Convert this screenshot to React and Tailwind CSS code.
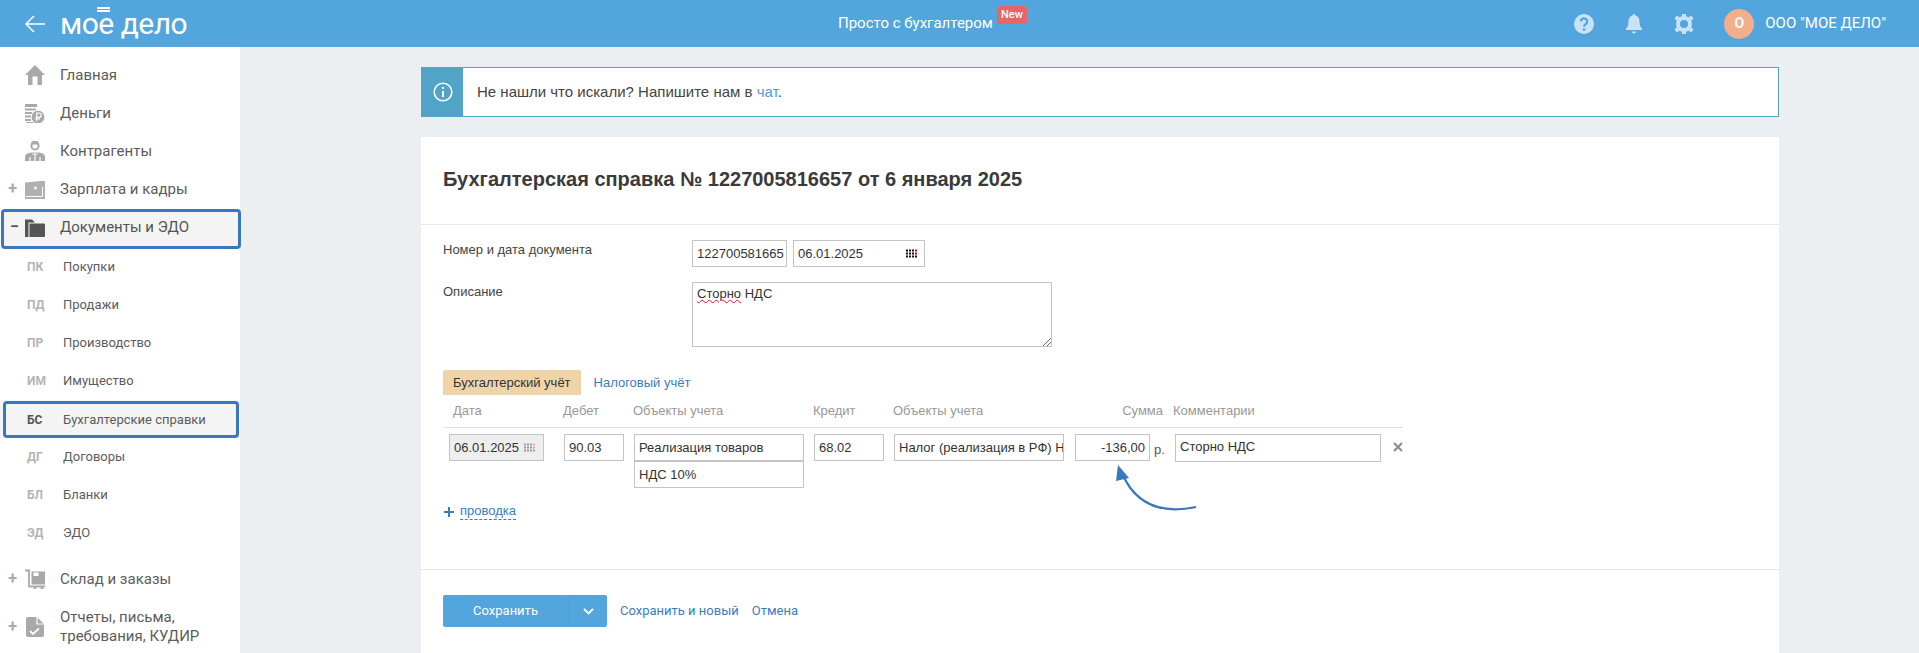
const ICONS = {
  home: (
    <path d="M10 0 L20 10 H17 V20 H12.500 V11.500 H7.500 V20 H3 V10 H0 Z" fill="#a9a9a9" />
  ),
  money: (
    <>
      <path d="M0 1h12v3H0zM0 5.500h11v2H0zM0 9h7v2H0zM0 12.500h6v2H0zM0 16h6v2H0zM1 19h9v1H1z" fill="#a9a9a9" />
      <circle cx="13" cy="14" r="6.800" fill="#a9a9a9" stroke="#fff" strokeWidth="0.800" />
      <path d="M11.800 18v-8h2.200a2 2 0 0 1 0 4.400H10.400M10.400 16H15" stroke="#fff" strokeWidth="1.200" fill="none" />
    </>
  ),
  people: (
    <>
      <circle cx="10" cy="5" r="3.600" fill="none" stroke="#a9a9a9" strokeWidth="2" />
      <path d="M6 3.500a4 4 0 0 1 8 0z" fill="#a9a9a9" />
      <path d="M0 20v-4c0-3 3-4 6.500-4.500H13.500c3.500.5 6.500 1.500 6.500 4.500v4z" fill="#a9a9a9" />
      <path d="M7.500 13h5M10 13v7M5 16v4M15 16v4" stroke="#fff" strokeWidth="1.200" />
    </>
  ),
  wallet: (
    <>
      <path d="M0 3.500 L16 2 L20 2 V20 H0 Z" fill="#b0b0b0" />
      <path d="M1 17.500H17.500V8" fill="none" stroke="#fff" strokeWidth="1" />
      <circle cx="10.500" cy="9" r="1.400" fill="#fff" />
    </>
  ),
  folder: (
    <>
      <path d="M0 2.500h7l3 3H3.500V20H0z" fill="#555" />
      <path d="M4.500 6.500H19a1 1 0 0 1 1 1V19a1 1 0 0 1-1 1H4.500z" fill="#555" />
    </>
  ),
  cart: (
    <>
      <path d="M0 1.500h4v16h16" fill="none" stroke="#a9a9a9" strokeWidth="1.800" />
      <path d="M6.500 2.500H20v13H6.500z" fill="#a9a9a9" />
      <path d="M8.500 3.500h5v3.500h-5z" fill="#fff" />
      <circle cx="10" cy="19.500" r="1.400" fill="#a9a9a9" />
      <circle cx="17" cy="19.500" r="1.400" fill="#a9a9a9" />
    </>
  ),
  report: (
    <>
      <path d="M3 0h9l7 7v11a2 2 0 0 1-2 2H3a2 2 0 0 1-2-2V2a2 2 0 0 1 2-2z" fill="#a9a9a9" />
      <path d="M12 0v7h7" fill="none" stroke="#fff" strokeWidth="1.200" />
      <path d="M5 14l3 3 6-5.500" fill="none" stroke="#fff" strokeWidth="1.800" />
    </>
  ),
};

const NavIcon = ({ name }) => (
  <svg width="20" height="20" viewBox="0 0 20 20" className="shrink-0">
    {ICONS[name]}
  </svg>
);

const NavRow = ({ icon, toggle, tall, children }) => (
  <div className={`flex items-center ${tall ? 'h-[58px]' : 'h-[38px]'}`}>
    <span className="w-[25px] text-center text-[16px] font-bold leading-none text-[#aaa]">{toggle}</span>
    <NavIcon name={icon} />
    <span className="ml-[15px] text-[15px] leading-[19px] text-[#5c5c5c]">{children}</span>
  </div>
);

const SubRow = ({ code, children }) => (
  <div className="flex h-[38px] items-center">
    <span className="ml-[27px] w-[36px] text-[12px] font-bold text-[#b4b4b4]">{code}</span>
    <span className="text-[13px] text-[#5c5c5c]">{children}</span>
  </div>
);

const Sidebar = () => (
  <aside className="w-[240px] shrink-0 bg-white pt-[9px] font-['Roboto',sans-serif]">
    <NavRow icon="home">Главная</NavRow>
    <NavRow icon="money">Деньги</NavRow>
    <NavRow icon="people">Контрагенты</NavRow>
    <NavRow icon="wallet" toggle="+">Зарплата и кадры</NavRow>
    {/* selected group, the frame hangs 1px below and past the rail */}
    <div className="relative z-10 mb-[-1px] ml-px mt-px flex h-[40px] w-[240px] items-center rounded-[4px] border-[3px] border-[#3a78bd] bg-[#f4f4f5] pb-[4px]">
      <span className="w-[21px] text-center text-[16px] font-bold leading-none text-[#555]">−</span>
      <NavIcon name="folder" />
      <span className="ml-[15px] text-[15px] leading-[19px] text-[#555]">Документы и ЭДО</span>
    </div>
    <SubRow code="ПК">Покупки</SubRow>
    <SubRow code="ПД">Продажи</SubRow>
    <SubRow code="ПР">Производство</SubRow>
    <SubRow code="ИМ">Имущество</SubRow>
    <div className="h-[38px] bg-[#f5f5f5] pl-[3px] pr-px pt-px">
      <div className="flex h-[37px] items-center rounded-[4px] border-[3px] border-[#3a78bd] bg-[#f4f4f5]">
        <span className="ml-[21px] w-[36px] text-[12px] font-bold text-[#555]">БС</span>
        <span className="text-[13px] text-[#5c5c5c]">Бухгалтерские справки</span>
      </div>
    </div>
    <SubRow code="ДГ">Договоры</SubRow>
    <SubRow code="БЛ">Бланки</SubRow>
    <SubRow code="ЭД">ЭДО</SubRow>
    <div className="h-2" />
    <NavRow icon="cart" toggle="+">Склад и заказы</NavRow>
    <NavRow icon="report" toggle="+" tall>
      Отчеты, письма,
      <br />
      требования, КУДИР
    </NavRow>
  </aside>
);

const Header = () => (
  <header className="flex h-[47px] shrink-0 items-center bg-[#53a6dd] font-['Roboto',sans-serif] text-white">
    <div className="flex w-[838px] shrink-0 items-center pl-[25px]">
      <svg width="20" height="18" viewBox="0 0 20 18" fill="none" stroke="#fff" strokeWidth="1.500">
        <path d="M20 9H1M9 1 1 9l8 8" />
      </svg>
      <div className="relative ml-[15px] text-[30px] font-normal leading-none tracking-[-0.5px]">
        мое дело
        <span className="absolute left-[37px] top-[-2px] flex w-[13px] flex-col gap-[1.500px]">
          <span className="h-[2px] bg-white" />
          <span className="h-[2px] bg-white" />
        </span>
      </div>
    </div>
    <span className="text-[15px]">Просто с бухгалтером</span>
    <span className="mb-[18px] ml-[4px] rounded-[3px] bg-[#e96464] px-[4px] text-[11px] font-medium leading-[18px]">New</span>
    <div className="ml-auto flex items-center pr-[33px]">
      <svg width="20" height="20" viewBox="0 0 20 20">
        <circle cx="10" cy="10" r="10" fill="#c8e2f6" />
        <path d="M6.800 7.500a3.200 3.200 0 1 1 4.800 2.800c-1 .6-1.500 1.100-1.500 2.400" fill="none" stroke="#53a6dd" strokeWidth="2.200" />
        <circle cx="10.100" cy="15.600" r="1.300" fill="#53a6dd" />
      </svg>
      <svg width="16" height="20" viewBox="0 0 16 20" className="ml-[32px]">
        <path d="M8 0a1.500 1.500 0 0 1 1.500 1.600C12 2.300 13.500 4.500 13.500 7.500c0 4 .8 5.500 2.500 7V16H0v-1.500c1.700-1.500 2.500-3 2.500-7 0-3 1.500-5.200 4-5.900A1.500 1.500 0 0 1 8 0z" fill="#c8e2f6" />
        <path d="M6 17.500h4a2 2 0 0 1-4 0z" fill="#c8e2f6" />
      </svg>
      <svg width="20" height="20" viewBox="0 0 20 20" className="ml-[32px]">
        <circle cx="10" cy="10" r="6" fill="none" stroke="#c8e2f6" strokeWidth="4" />
        <path d="M8 0h4v4H8zM8 16h4v4H8zM0.500 5l2-3.500L6 3.500l-2 3.500zM14 16.500l2-3.500 3.500 2-2 3.500zM2.500 18.500l-2-3.500L4 13l2 3.500zM16 7l-2-3.500 3.500-2 2 3.500z" fill="#c8e2f6" />
      </svg>
      <span className="ml-[30px] flex h-[30px] w-[30px] items-center justify-center rounded-full bg-[#f3ae8a] text-[14px] font-bold">
        О
      </span>
      <span className="ml-[11px] text-[15px]">ООО "МОЕ ДЕЛО"</span>
    </div>
  </header>
);

const DateDots = ({ muted }) => {
  const dots = [];
  [0, 1, 2].forEach((row) =>
    [0, 1, 2, 3].forEach((col) => {
      const red = col === 3 && row < 2;
      const fill = muted ? (red ? '#e9a0b0' : '#999') : red ? '#d4002a' : '#111';
      dots.push(<rect key={`${row}-${col}`} x={col * 3} y={row * 3 + 0.5} width="2" height="2" fill={fill} />);
    }),
  );
  return (
    <svg width="12" height="9" viewBox="0 0 12 9" className="shrink-0">
      {dots}
    </svg>
  );
};

const Field = ({ className = '', bg = 'bg-white', children }) => (
  <div
    className={`flex h-[27px] shrink-0 items-center overflow-hidden whitespace-nowrap border border-[#c4c4c4] px-[4px] text-[13px] text-[#333] ${bg} ${className}`}
  >
    {children}
  </div>
);

const Form = () => (
  <section className="relative mt-5 flex-1 bg-white font-['Liberation_Sans',sans-serif] text-[#333]">
    <h1 className="flex h-[88px] items-center border-b border-[#e6e6e6] pb-[3px] pl-[22px] text-[20px] font-bold text-[#3a3a3a]">
      Бухгалтерская справка № 1227005816657 от 6 января 2025
    </h1>

    <div className="flex pl-[22px] pt-[15px]">
      <label className="w-[249px] pt-[2px] text-[13px] leading-[16px] text-[#444]">Номер и дата документа</label>
      <Field className="w-[95px]">122700581665</Field>
      <Field className="ml-[6px] w-[132px] justify-between">
        06.01.2025
        <span className="pr-[2px]"><DateDots /></span>
      </Field>
    </div>

    <div className="mt-[15px] flex pl-[22px]">
      <label className="w-[249px] pt-[2px] text-[13px] leading-[16px] text-[#444]">Описание</label>
      <div className="relative h-[65px] w-[360px] border border-[#c4c4c4] px-[4px] pt-[3px] text-[13px] leading-[16px]">
        <span className="underline decoration-[#e0103a] decoration-wavy decoration-1">Сторно</span> НДС
        <svg width="9" height="9" viewBox="0 0 9 9" className="absolute bottom-0 right-0" stroke="#666" strokeWidth="1">
          <path d="M1 9 9 1M5 9l4-4" />
        </svg>
      </div>
    </div>

    <div className="mt-[23px] flex items-center pl-[22px] text-[13px]">
      <span className="rounded-t-[2px] bg-[#efd4a9] px-[10px] leading-[25px]">Бухгалтерский учёт</span>
      <span className="ml-[13px] text-[#3a7dbe]">Налоговый учёт</span>
    </div>

    <div className="ml-[22px] flex h-[33px] w-[960px] items-center border-b border-[#e0e0e0] text-[13px] text-[#999]">
      <span className="ml-[10px] w-[110px]">Дата</span>
      <span className="w-[70px]">Дебет</span>
      <span className="w-[180px]">Объекты учета</span>
      <span className="w-[80px]">Кредит</span>
      <span className="w-[200px]">Объекты учета</span>
      <span className="w-[70px] text-right">Сумма</span>
      <span className="ml-[10px]">Комментарии</span>
    </div>

    <div className="ml-[28px] mt-[6px] flex items-start text-[13px]">
      <Field className="w-[95px] justify-between" bg="bg-[#eeeeee]">
        06.01.2025
        <span className="pr-[3px]"><DateDots muted /></span>
      </Field>
      <Field className="ml-[20px] w-[60px]">90.03</Field>
      <div className="ml-[10px] flex w-[170px] flex-col">
        <Field className="w-full">Реализация товаров</Field>
        <Field className="w-full">НДС 10%</Field>
      </div>
      <Field className="ml-[10px] w-[70px]">68.02</Field>
      <Field className="ml-[10px] w-[170px]">Налог (реализация в РФ) Н</Field>
      <Field className="ml-[11px] w-[75px] justify-end">-136,00</Field>
      <span className="ml-[4px] w-[21px] pt-[6px] text-[#555]">р.</span>
      <Field className="h-[28px] w-[206px] pb-[3px]">Сторно НДС</Field>
      <svg width="10" height="10" viewBox="0 0 10 10" className="ml-[12px] mt-[8px]" stroke="#8e8e8e" strokeWidth="2.200">
        <path d="M1 1l8 8M9 1l-8 8" />
      </svg>
    </div>

    <div className="ml-[23px] mt-[15px] flex items-center text-[13px] text-[#3a7dbe]">
      <svg width="10" height="10" viewBox="0 0 10 10" stroke="#3a7dbe" strokeWidth="2">
        <path d="M5 0v10M0 5h10" />
      </svg>
      <span className="ml-[6px] border-b border-dashed border-[#3a7dbe] leading-[16px]">проводка</span>
    </div>

    <div className="mt-[49px] flex items-center border-t border-[#e6e6e6] pl-[22px] pt-[25px] text-[13px]">
      <div className="flex h-[32px] w-[164px] items-center rounded-[2px] bg-[#53a6dd] font-['Roboto',sans-serif] text-white">
        <span className="w-[125px] text-center">Сохранить</span>
        <span className="flex h-full flex-1 items-center justify-center border-l border-[#50a2d8]">
          <svg width="11" height="7" viewBox="0 0 11 7" fill="none" stroke="#fff" strokeWidth="1.800">
            <path d="m1 1 4.500 4.500L10 1" />
          </svg>
        </span>
      </div>
      <span className="ml-[13px] font-['Roboto',sans-serif] text-[#3a7dbe]">Сохранить и новый</span>
      <span className="ml-[13px] font-['Roboto',sans-serif] text-[#3a7dbe]">Отмена</span>
    </div>

    {/* annotation arrow over the form */}
    <svg width="90" height="50" viewBox="0 0 90 50" className="absolute left-[688px] top-[326px]" fill="none">
      <path d="M87 44C58 50 28 46 13 10" stroke="#3a78bd" strokeWidth="2.200" />
      <path d="M9 2 20 15 7 18 Z" fill="#3a78bd" />
    </svg>
  </section>
);

const Notice = () => (
  <div className="flex h-[50px] shrink-0 border border-[#51a4c6] bg-white font-['Liberation_Sans',sans-serif]">
    <div className="flex w-[41px] items-center justify-center bg-[#51a4c6]">
      <svg width="20" height="20" viewBox="0 0 20 20" fill="none" stroke="#fff" strokeWidth="1.600">
        <circle cx="10" cy="10" r="8.800" />
        <path d="M10 9v6M10 5v2" strokeWidth="2" />
      </svg>
    </div>
    <p className="ml-[14px] self-center text-[15px] text-[#444]">
      Не нашли что искали? Напишите нам в <span className="text-[#4a9fdc]">чат</span>.
    </p>
  </div>
);

export default function App() {
  return (
    <div className="flex h-[653px] flex-col overflow-hidden bg-[#ebeff2]">
      <Header />
      <div className="flex min-h-0 flex-1">
        <Sidebar />
        <main className="ml-[181px] mt-5 flex w-[1358px] flex-col">
          <Notice />
          <Form />
        </main>
      </div>
    </div>
  );
}
